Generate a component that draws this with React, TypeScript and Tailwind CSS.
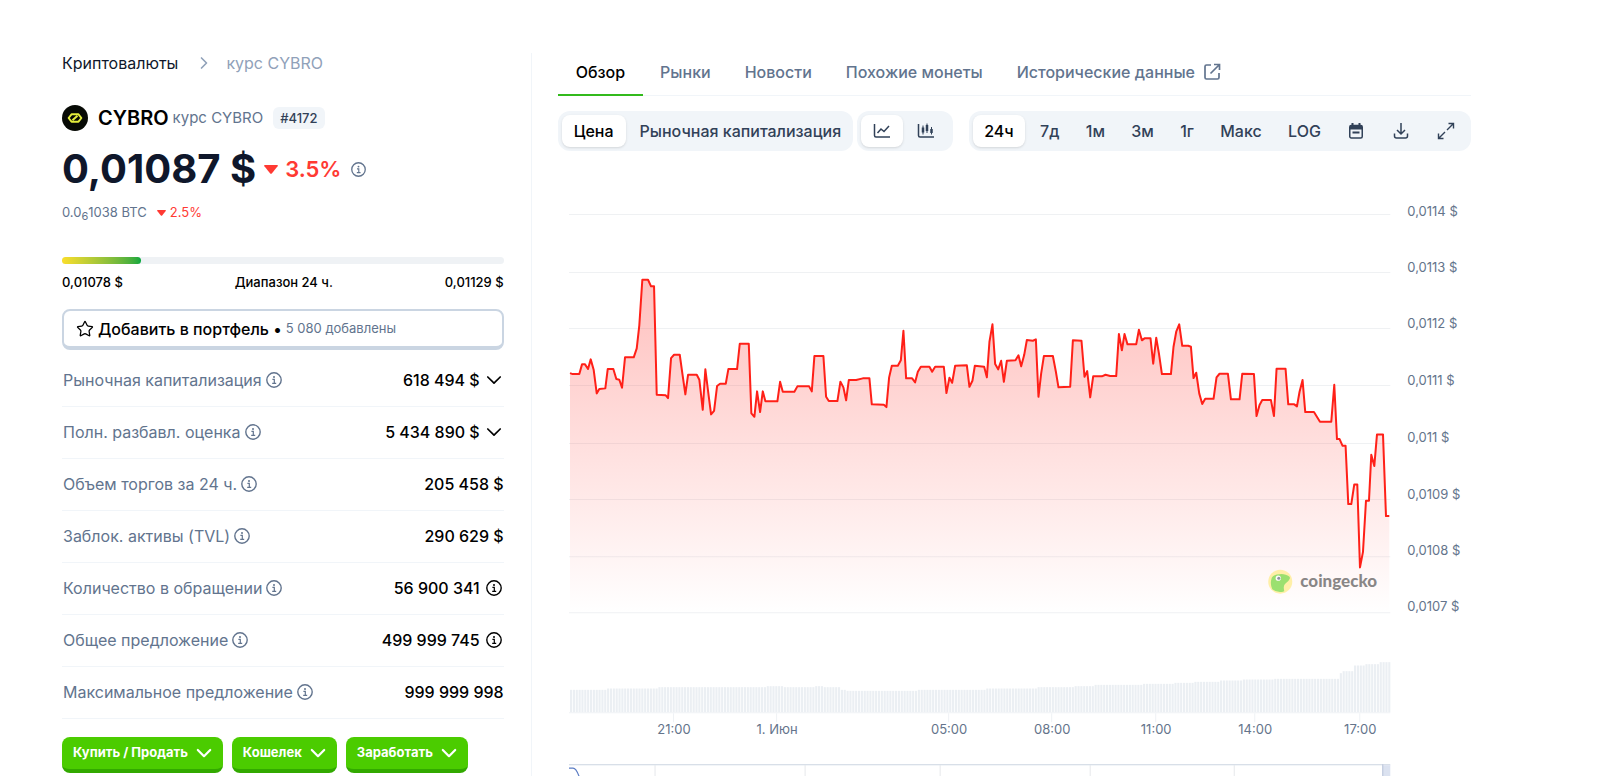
import clsx from "clsx";
import { FiChevronRight } from "react-icons/fi";
import { Star } from "lucide-react";

const stats = [
  { label: "Рыночная капитализация", value: "618 494 $", extra: "chevron" },
  { label: "Полн. разбавл. оценка", value: "5 434 890 $", extra: "chevron" },
  { label: "Объем торгов за 24 ч.", value: "205 458 $" },
  { label: "Заблок. активы (TVL)", value: "290 629 $" },
  { label: "Количество в обращении", value: "56 900 341", extra: "info" },
  { label: "Общее предложение", value: "499 999 745", extra: "info" },
  { label: "Максимальное предложение", value: "999 999 998" },
];

const tabs = ["Обзор", "Рынки", "Новости", "Похожие монеты", "Исторические данные"];
const ranges = ["24ч", "7д", "1м", "3м", "1г", "Макс", "LOG"];
const actions = ["Купить / Продать", "Кошелек", "Заработать"];

// x/y pairs, three units per chart pixel
const price = [
  30, 549, 38, 552, 58, 552, 66, 523, 75, 523, 84, 537, 92, 508, 101, 540, 110, 610, 118, 597, 136, 595, 143, 537,
  160, 537, 169, 567, 178, 569, 186, 593, 195, 502, 221, 502, 230, 475, 238, 405, 247, 269, 264, 269, 273, 289, 282, 289,
  290, 614, 317, 616, 324, 624, 333, 504, 342, 494, 359, 494, 367, 550, 376, 613, 384, 554, 410, 554, 418, 569, 428, 659,
  436, 538, 445, 610, 453, 673, 462, 662, 471, 588, 480, 581, 497, 581, 505, 537, 531, 537, 539, 461, 566, 461, 574, 670,
  583, 680, 591, 604, 600, 666, 608, 604, 616, 634, 652, 634, 660, 575, 668, 605, 703, 605, 712, 589, 747, 589, 755, 604,
  763, 498, 790, 498, 798, 620, 806, 633, 832, 633, 841, 575, 850, 592, 858, 631, 866, 570, 888, 570, 908, 565, 928, 565,
  935, 643, 971, 644, 979, 651, 987, 562, 995, 527, 1013, 527, 1022, 511, 1030, 422, 1038, 565, 1056, 565, 1065, 577,
  1073, 545, 1082, 530, 1108, 530, 1116, 545, 1125, 530, 1151, 530, 1159, 609, 1168, 563, 1176, 578, 1185, 527, 1220, 526,
  1228, 590, 1237, 572, 1244, 527, 1272, 530, 1280, 562, 1288, 455, 1297, 403, 1305, 522, 1314, 538, 1323, 512, 1331, 575,
  1340, 512, 1366, 511, 1375, 496, 1383, 529, 1392, 495, 1400, 450, 1418, 452, 1427, 448, 1435, 620, 1443, 550, 1451, 498,
  1478, 498, 1487, 545, 1495, 592, 1530, 590, 1538, 451, 1564, 452, 1573, 560, 1581, 543, 1590, 622, 1599, 559, 1625, 559,
  1636, 554, 1650, 558, 1668, 558, 1676, 432, 1685, 481, 1693, 432, 1702, 463, 1728, 463, 1736, 419, 1745, 451, 1753, 445,
  1771, 445, 1779, 521, 1788, 443, 1796, 490, 1805, 552, 1832, 552, 1840, 470, 1848, 425, 1857, 403, 1866, 467, 1884, 467,
  1892, 470, 1900, 564, 1908, 548, 1917, 610, 1926, 642, 1935, 626, 1960, 626, 1969, 562, 1978, 551, 2003, 551, 2012, 628,
  2038, 628, 2046, 551, 2081, 552, 2089, 678, 2098, 645, 2106, 630, 2132, 630, 2141, 678, 2149, 536, 2176, 536, 2184, 643,
  2202, 643, 2210, 649, 2218, 605, 2227, 570, 2235, 666, 2261, 666, 2279, 695, 2313, 695, 2322, 584, 2330, 747, 2338, 747,
  2347, 767, 2356, 767, 2364, 942, 2373, 942, 2382, 883, 2391, 883, 2399, 1132, 2408, 1085, 2417, 932, 2426, 932,
  2433, 794, 2442, 828, 2450, 733, 2468, 733, 2477, 978, 2487, 978,
];

// [end of the step, bar height], same units
const volume = [
  [137, 67], [288, 71], [613, 75], [665, 78], [760, 75], [790, 78], [837, 75], [852, 67], [1070, 64], [1277, 67],
  [1432, 71], [1535, 75], [1595, 78], [1743, 82], [1837, 85], [1897, 88], [1975, 91], [2045, 95], [2140, 98],
  [2330, 100], [2346, 117], [2380, 123], [2413, 140], [2450, 144], [2500, 150],
];

const gridLines = [
  { y: 24, textY: 26, label: "0,0114 $" },
  { y: 82, textY: 82, label: "0,0113 $" },
  { y: 138, textY: 138, label: "0,0112 $" },
  { y: 195, textY: 195, label: "0,0111 $" },
  { y: 253, textY: 252, label: "0,011 $" },
  { y: 309, textY: 309, label: "0,0109 $" },
  { y: 366, textY: 365, label: "0,0108 $" },
  { y: 422, textY: 421, label: "0,0107 $" },
];

const times = [
  { x: 116, label: "21:00" },
  { x: 219, label: "1. Июн" },
  { x: 391, label: "05:00" },
  { x: 494, label: "08:00" },
  { x: 598, label: "11:00" },
  { x: 697, label: "14:00" },
  { x: 802, label: "17:00" },
];

function InfoIcon({ className }: { className?: string }) {
  return (
    <svg viewBox="0 0 16 16" className={clsx("shrink-0", className)} fill="none" stroke="currentColor">
      <circle cx="8" cy="8" r="7.2" strokeWidth="1.400" />
      <path d="M6.400 7.300h1.900v3.900M6.200 11.300h4" strokeWidth="1.200" />
      <circle cx="8" cy="4.900" r="1" fill="currentColor" stroke="none" />
    </svg>
  );
}

function Chevron({ className, strokeWidth }: { className?: string; strokeWidth: number }) {
  return (
    <svg viewBox="0 0 16 16" className={clsx("w-4 h-4 shrink-0", className)} fill="none" stroke="currentColor" strokeWidth={strokeWidth} strokeLinecap="round" strokeLinejoin="round">
      <path d="M1.800 5L8 11.200 14.200 5" />
    </svg>
  );
}

function CybroLogo() {
  return (
    <svg viewBox="0 0 26 26" className="w-[26px] h-[26px]">
      <circle cx="13" cy="13" r="13" fill="#070a05" />
      <path d="M9.500 9.300h7L19.400 13l-2.900 3.700h-7L6.600 13z" fill="none" stroke="#e4ee3c" strokeWidth="1.900" strokeLinejoin="round" />
      <path d="M10.500 15.200l5-4.400" stroke="#e4ee3c" strokeWidth="2" />
    </svg>
  );
}

function Down({ className }: { className?: string }) {
  return (
    <svg viewBox="0 0 14 9" className={className}>
      <path d="M1 0h12q1.500 0 .6 1.300L8 8.200q-1 1-2 0L.4 1.300Q-.500 0 1 0z" fill="#ff3a33" />
    </svg>
  );
}

function Chart() {
  const points: string[] = [];
  for (let i = 0; i < price.length; i += 2) {
    points.push(`${(price[i] / 3 + 2).toFixed(1)},${(price[i + 1] / 3).toFixed(1)}`);
  }

  const bars = Array.from({ length: 288 }, (_, i) => {
    const x = 12 + i * 2.85;
    const step = volume.find(([end]) => (x - 2) * 3 < end) ?? volume[volume.length - 1];
    return { x, h: step[1] / 3 };
  });

  return (
    <svg viewBox="0 0 913 586" className="w-full block mt-[39px]" role="img" aria-label="График цены CYBRO">
      <defs>
        <linearGradient id="area" x1="0" y1="90" x2="0" y2="423" gradientUnits="userSpaceOnUse">
          <stop offset="0" stopColor="#ff3a33" stopOpacity=".32" />
          <stop offset="1" stopColor="#ff3a33" stopOpacity="0" />
        </linearGradient>
      </defs>

      {gridLines.map((line) => (
        <g key={line.label}>
          <path d={`M11 ${line.y}.5H832`} stroke="#eff1f3" />
          <text x="849" y={line.textY} fontSize="13" fill="#64748b">{line.label}</text>
        </g>
      ))}

      <polygon points={`12,423 ${points.join(" ")} 831,423`} fill="url(#area)" />
      <polyline points={points.join(" ")} fill="none" stroke="#ff2018" strokeWidth="2" strokeLinejoin="round" />

      <g opacity=".55">
        <circle cx="722" cy="391.500" r="12" fill="#ffe866" />
        <path d="M713.500 387.500q2-3.500 7.500-3.500q3.500-.500 6.500.5q5 1.500 4 4q-1 2.500-4 4.500q-2 1.500-2 4q0 2 .5 4q-6 2.500-12-2q-2.500-5-.5-11.500z" fill="#4bcc00" />
        <circle cx="720" cy="388" r="2.600" fill="#fff" />
        <circle cx="720.500" cy="388" r="1.500" fill="#334155" />
        <text x="742" y="397" fontSize="17" fontWeight="900" fontFamily="Lato, sans-serif" fill="#2a2a2a">coingecko</text>
      </g>

      {bars.map((bar) => (
        <rect key={bar.x} x={bar.x} y={522 - bar.h} width="2.100" height={bar.h} fill="#ebeff3" />
      ))}
      <path d="M11 522.500H832" stroke="#eff2f5" />
      {times.map((time) => (
        <g key={time.label}>
          <path d={`M${time.x - 0.5} 523v9`} stroke="#eff2f5" />
          <text x={time.x} y="544" fontSize="13" textAnchor="middle" fill="#64748b">{time.label}</text>
        </g>
      ))}

      <path d="M97 575v11M247 575v11M382 575v11M532 575v11M676 575v11" stroke="#e6e8eb" />
      <path d="M11 574.500H832" stroke="#cbd5e1" />
      <path d="M824 575h8v11h-8z" fill="#dbe2f0" />
      <path d="M824.500 574v12" stroke="#b9c4da" />
      <path d="M11 578h4q3 0 6 8" fill="none" stroke="#5b7cc4" strokeWidth="1.200" />
    </svg>
  );
}

export default function App() {
  return (
    <div className="flex min-h-screen bg-white pt-[53px] pl-[62px] pr-[129px] font-[Inter,sans-serif] text-slate-900">
      <aside className="w-1/3 pr-[27px] border-r border-slate-100">
        <nav className="flex items-center text-base leading-5">
          <a href="#coins">Криптовалюты</a>
          <FiChevronRight className="w-5 h-5 ml-4 mr-3 text-slate-400" />
          <span className="text-slate-400">курс CYBRO</span>
        </nav>

        <div className="flex items-center mt-8 h-[26px]">
          <CybroLogo />
          <h1 className="flex items-center ml-2.5">
            <span className="text-xl font-semibold text-black">CYBRO</span>
            <span className="ml-1 text-[15px] text-slate-500">курс CYBRO</span>
          </h1>
          <span className="ml-2.5 px-[7px] h-[22px] leading-[22px] rounded-md bg-slate-100 text-[13px] font-medium text-slate-700">#4172</span>
        </div>

        <div className="flex items-center mt-4 h-[44px]">
          <span className="text-[40px] font-bold leading-[44px]">0,01087 $</span>
          <Down className="w-3.5 h-[9px] ml-2" />
          <span className="ml-[7px] text-[22px] font-semibold text-[#ff3a33]">3.5%</span>
          <InfoIcon className="w-[15px] h-[15px] ml-2.5 text-slate-500" />
        </div>

        <div className="flex items-center mt-3 h-5 text-[13px] text-slate-500">
          <span>0.0<sub className="text-[11px]">6</sub>1038 BTC</span>
          <Down className="w-[9px] h-1.5 ml-2.5" />
          <span className="ml-1 text-[#ff3a33]">2.5%</span>
        </div>

        <div className="mt-[34px] h-[7px] rounded-full bg-[#eff2f5]">
          <div className="h-full w-[18%] rounded-full bg-linear-to-r from-[#fade2a] to-[#00a83e]" />
        </div>
        <div className="flex justify-between mt-2 text-[13px] leading-5 font-medium text-black">
          <span>0,01078 $</span>
          <span>Диапазон 24 ч.</span>
          <span>0,01129 $</span>
        </div>

        <button className="flex items-center w-full h-[41px] mt-[17px] px-3 rounded-lg border-2 border-b-4 border-slate-300 text-left">
          <Star className="w-[18px] h-[18px] text-black" strokeWidth={1.7} />
          <span className="ml-1 text-base font-medium text-black">Добавить в портфель •</span>
          <span className="ml-1 text-[13px] text-slate-500">5 080 добавлены</span>
        </button>

        <table className="w-full mt-1">
          <tbody>
            {stats.map((stat) => (
              <tr key={stat.label} className="h-[52px] border-b border-slate-100">
                <th className="pl-px text-left text-base font-normal text-slate-500">
                  <span className="flex items-center">
                    {stat.label}
                    <InfoIcon className="w-4 h-4 ml-1" />
                  </span>
                </th>
                <td className="text-base font-medium text-black">
                  <span className="flex items-center justify-end">
                    {stat.value}
                    {stat.extra === "chevron" && <Chevron className="ml-1.5 mr-0.5" strokeWidth={1.7} />}
                    {stat.extra === "info" && <InfoIcon className="w-4 h-4 ml-1.5 mr-0.5" />}
                  </span>
                </td>
              </tr>
            ))}
          </tbody>
        </table>

        <div className="flex gap-[9px] mt-[18px]">
          {actions.map((action) => (
            <button key={action} className="flex items-center h-9 px-[11px] rounded-lg border-b-4 border-[#32a900] bg-[#4bcc00] text-[13px] font-bold text-white">
              {action}
              <Chevron className="ml-2" strokeWidth={2.2} />
            </button>
          ))}
        </div>
      </aside>

      <section className="w-2/3 pl-[26px]">
        <nav className="flex h-[43px] border-b border-slate-100 text-base font-medium text-slate-500">
          {tabs.map((tab, i) => (
            <a
              key={tab}
              href="#tab"
              className={clsx("flex items-center h-[43px] pb-1 border-b-2", i === 0 ? "px-[18px] border-[#32ba1c] text-black" : "px-[17px] border-transparent")}
            >
              {tab}
              {i === 4 && (
                <svg viewBox="0 0 18 18" className="w-[18px] h-[18px] ml-2" fill="none" stroke="currentColor" strokeWidth="1.700">
                  <path d="M8 2H3.500Q2 2 2 3.500v11Q2 16 3.500 16h11q1.500 0 1.500-1.500V10M11 1.500h5.500V7M16.500 1.500L7.500 10.500" />
                </svg>
              )}
            </a>
          ))}
        </nav>

        <div className="flex mt-[15px] h-10 text-base font-medium text-slate-700">
          <div className="flex p-1 rounded-xl bg-slate-100">
            <button className="px-3 rounded-lg bg-white shadow-sm text-black">Цена</button>
            <button className="pl-3.5 pr-2">Рыночная капитализация</button>
          </div>
          <div className="flex ml-1 p-1 rounded-xl bg-slate-100">
            <button aria-label="Линия" className="px-3 rounded-lg bg-white shadow-sm">
              <svg viewBox="0 0 18 16" className="w-[18px] h-4" fill="none" stroke="currentColor" strokeWidth="1.500">
                <path d="M1.500 1v11.500q0 1.500 1.500 1.500h14M4.500 10l3.500-4 3 2.500L16 3" />
              </svg>
            </button>
            <button aria-label="Свечи" className="px-3.5">
              <svg viewBox="0 0 18 16" className="w-[18px] h-4" fill="none" stroke="currentColor" strokeWidth="1.500">
                <path d="M1.500 1v11.500q0 1.500 1.500 1.500h14" />
                <path d="M6 2.500v9M10 .5v9.500M14.500 4v7.500" strokeWidth="1" />
                <path d="M6 4.500v5M10 2v6M14.500 6v4" strokeWidth="2.500" />
              </svg>
            </button>
          </div>
          <div className="flex flex-1 justify-between ml-4 p-1 rounded-xl bg-slate-100">
            {ranges.map((range, i) => (
              <button key={range} className={clsx("px-[11px] rounded-lg", i === 0 && "bg-white shadow-sm text-black")}>{range}</button>
            ))}
            <button aria-label="Календарь" className="px-3">
              <svg viewBox="0 0 16 16" className="w-4 h-4" fill="none" stroke="currentColor" strokeWidth="1.500">
                <rect x="1.750" y="2.500" width="12.500" height="12.500" rx="1.500" />
                <path d="M2 4.500h12" strokeWidth="4" />
                <path d="M4.500 0v3M11.500 0v3M4.500 9.500h7" strokeWidth="2" />
              </svg>
            </button>
            <button aria-label="Скачать" className="px-3">
              <svg viewBox="0 0 16 16" className="w-4 h-4" fill="none" stroke="currentColor" strokeWidth="1.500">
                <path d="M8 0v10.500M4 7l4 4 4-4M1.500 10.500V13q0 2 2 2h9q2 0 2-2v-2.500" />
              </svg>
            </button>
            <button aria-label="На весь экран" className="px-3">
              <svg viewBox="0 0 18 18" className="w-[18px] h-[18px]" fill="none" stroke="currentColor" strokeWidth="1.400">
                <path d="M11.500 1.500h5v5M16.500 1.500L10 8M6.500 16.500h-5v-5M1.500 16.500L8 10" />
              </svg>
            </button>
          </div>
        </div>

        <Chart />
      </section>
    </div>
  );
}
